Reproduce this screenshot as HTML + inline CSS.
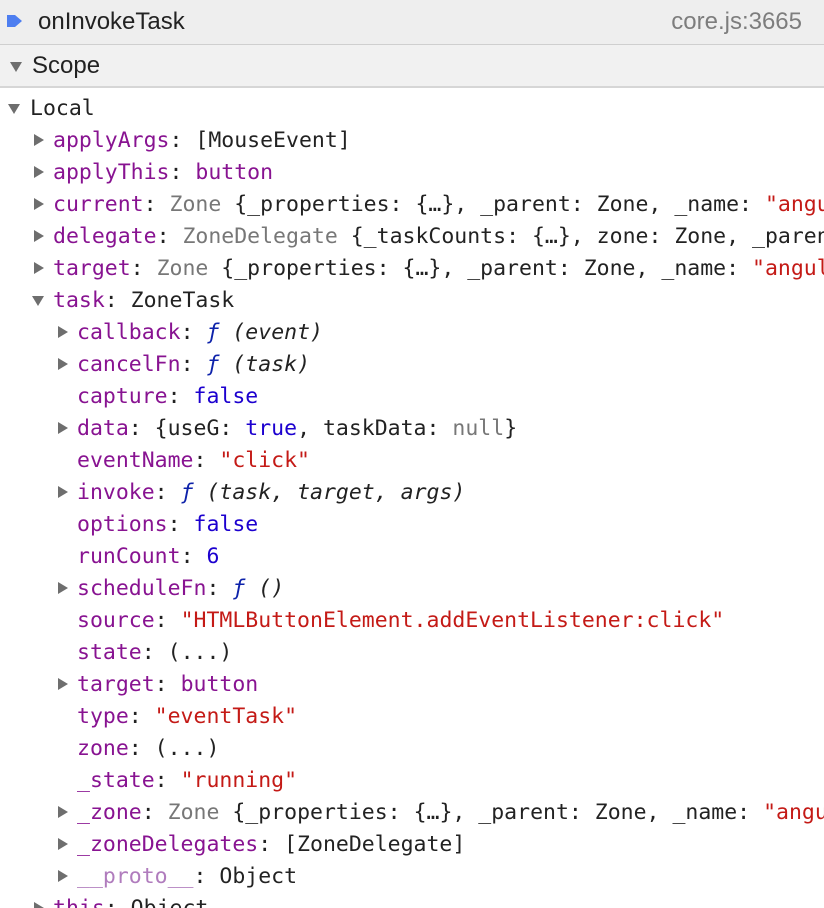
<!DOCTYPE html>
<html><head><meta charset="utf-8"><style>
html,body{margin:0;width:824px;height:908px;overflow:hidden}
body{background:#fff;position:relative}
.h1{position:absolute;left:0;top:0;width:824px;height:44px;background:#eeeeee;border-bottom:1px solid #cfcfcf;font:24px "Liberation Sans",sans-serif}
.h2{position:absolute;left:0;top:45px;width:824px;height:41px;background:#f1f1f1;border-bottom:2px solid #d6d6d6;font:24px "Liberation Sans",sans-serif}
.r{position:absolute;left:0;width:824px;overflow:hidden;height:32px;line-height:32px;white-space:pre;font:21.5px "DejaVu Sans Mono","Liberation Mono",monospace;color:#222}
.r>span:last-child{top:4px}
.t{display:inline-block;width:0;height:0;border-top:6px solid transparent;border-bottom:6px solid transparent;border-left:10px solid #6e6e6e;position:absolute;top:10px}
.d{display:inline-block;width:0;height:0;border-left:6px solid transparent;border-right:6px solid transparent;border-top:10px solid #6e6e6e;position:absolute;top:12px}
.k{color:#881391}.g{color:#777}.s{color:#c41a16}.n{color:#1c00cf}.f{color:#0d22aa;font-style:italic}.i{font-style:italic}.p{color:#b07cbd}
</style></head><body>
<div class="h1"><svg style="position:absolute;left:7px;top:12px" width="16" height="18"><path d="M0 3h8l7 6-7 6H0z" fill="#4d7ef0"/></svg><span style="position:absolute;left:38px;top:8px;color:#222">onInvokeTask</span><span style="position:absolute;right:22px;top:8px;color:#7d7d7d">core.js:3665</span></div>
<div class="h2"><span class="d" style="left:10px;top:17px"></span><span style="position:absolute;left:32px;top:7px;color:#222">Scope</span></div>
<div class="r" style="top:92px"><span class="d" style="left:8px"></span><span style="position:absolute;left:30px">Local</span></div>
<div class="r" style="top:124px"><span class="t" style="left:34px"></span><span style="position:absolute;left:53px"><span class="k">applyArgs</span>: [MouseEvent]</span></div>
<div class="r" style="top:156px"><span class="t" style="left:34px"></span><span style="position:absolute;left:53px"><span class="k">applyThis</span>: <span class="k">button</span></span></div>
<div class="r" style="top:188px"><span class="t" style="left:34px"></span><span style="position:absolute;left:53px"><span class="k">current</span>: <span class="g">Zone</span> {_properties: {…}, _parent: Zone, _name: <span class="s">"angular"</span></span></div>
<div class="r" style="top:220px"><span class="t" style="left:34px"></span><span style="position:absolute;left:53px"><span class="k">delegate</span>: <span class="g">ZoneDelegate</span> {_taskCounts: {…}, zone: Zone, _parent</span></div>
<div class="r" style="top:252px"><span class="t" style="left:34px"></span><span style="position:absolute;left:53px"><span class="k">target</span>: <span class="g">Zone</span> {_properties: {…}, _parent: Zone, _name: <span class="s">"angular"</span></span></div>
<div class="r" style="top:284px"><span class="d" style="left:32px"></span><span style="position:absolute;left:53px"><span class="k">task</span>: ZoneTask</span></div>
<div class="r" style="top:316px"><span class="t" style="left:58px"></span><span style="position:absolute;left:77px"><span class="k">callback</span>: <span class="f">ƒ</span> <span class="i">(event)</span></span></div>
<div class="r" style="top:348px"><span class="t" style="left:58px"></span><span style="position:absolute;left:77px"><span class="k">cancelFn</span>: <span class="f">ƒ</span> <span class="i">(task)</span></span></div>
<div class="r" style="top:380px"><span style="position:absolute;left:77px"><span class="k">capture</span>: <span class="n">false</span></span></div>
<div class="r" style="top:412px"><span class="t" style="left:58px"></span><span style="position:absolute;left:77px"><span class="k">data</span>: {useG: <span class="n">true</span>, taskData: <span class="g">null</span>}</span></div>
<div class="r" style="top:444px"><span style="position:absolute;left:77px"><span class="k">eventName</span>: <span class="s">"click"</span></span></div>
<div class="r" style="top:476px"><span class="t" style="left:58px"></span><span style="position:absolute;left:77px"><span class="k">invoke</span>: <span class="f">ƒ</span> <span class="i">(task, target, args)</span></span></div>
<div class="r" style="top:508px"><span style="position:absolute;left:77px"><span class="k">options</span>: <span class="n">false</span></span></div>
<div class="r" style="top:540px"><span style="position:absolute;left:77px"><span class="k">runCount</span>: <span class="n">6</span></span></div>
<div class="r" style="top:572px"><span class="t" style="left:58px"></span><span style="position:absolute;left:77px"><span class="k">scheduleFn</span>: <span class="f">ƒ</span> <span class="i">()</span></span></div>
<div class="r" style="top:604px"><span style="position:absolute;left:77px"><span class="k">source</span>: <span class="s">"HTMLButtonElement.addEventListener:click"</span></span></div>
<div class="r" style="top:636px"><span style="position:absolute;left:77px"><span class="k">state</span>: (...)</span></div>
<div class="r" style="top:668px"><span class="t" style="left:58px"></span><span style="position:absolute;left:77px"><span class="k">target</span>: <span class="k">button</span></span></div>
<div class="r" style="top:700px"><span style="position:absolute;left:77px"><span class="k">type</span>: <span class="s">"eventTask"</span></span></div>
<div class="r" style="top:732px"><span style="position:absolute;left:77px"><span class="k">zone</span>: (...)</span></div>
<div class="r" style="top:764px"><span style="position:absolute;left:77px"><span class="k">_state</span>: <span class="s">"running"</span></span></div>
<div class="r" style="top:796px"><span class="t" style="left:58px"></span><span style="position:absolute;left:77px"><span class="k">_zone</span>: <span class="g">Zone</span> {_properties: {…}, _parent: Zone, _name: <span class="s">"angular"</span></span></div>
<div class="r" style="top:828px"><span class="t" style="left:58px"></span><span style="position:absolute;left:77px"><span class="k">_zoneDelegates</span>: [ZoneDelegate]</span></div>
<div class="r" style="top:860px"><span class="t" style="left:58px"></span><span style="position:absolute;left:77px"><span class="p">__proto__</span>: Object</span></div>
<div class="r" style="top:892px;height:16px"><span class="t" style="left:34px"></span><span style="position:absolute;left:53px"><span class="k">this</span>: Object</span></div>
</body></html>
